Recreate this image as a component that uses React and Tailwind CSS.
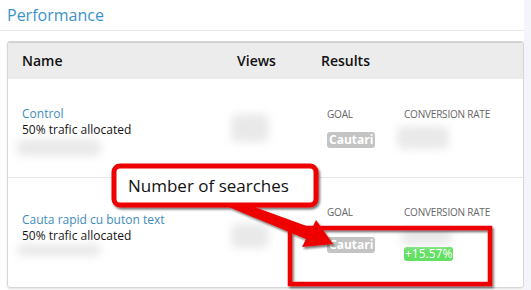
import React from "react";

const Blur = ({ className }) => (
  <div className={`rounded-md bg-[#e9e9e9] blur-[4px] ${className}`} />
);

const Label = ({ children }) => (
  <span className="text-[10px] leading-[12px] text-[#666] tracking-[-0.2px] whitespace-nowrap">
    {children}
  </span>
);

const Row = ({ name, last, children }) => (
  <div
    className={`grid grid-cols-[215px_84px_1fr] pl-[14px] items-center ${
      last ? "h-[109px] pt-[2px]" : "h-[100px] border-b border-[#e6e6e6]"
    }`}
  >
    <div className={`flex flex-col ${last ? "" : "mt-[6px]"}`}>
      <span className="text-[12px] leading-[16px] text-[#3d8dbd]">{name}</span>
      <span className="text-[12px] leading-[16px] text-[#111]">50% trafic allocated</span>
      <Blur className={`ml-[-5px] w-[84px] ${last ? "mt-[0px] h-[12px]" : "mt-[1px] h-[17px]"}`} />
    </div>
    <div>
      <Blur className={`ml-[-6px] w-[38px] ${last ? "h-[24px] mt-[4px]" : "h-[28px]"}`} />
    </div>
    <div className="flex pl-[6px]">{children}</div>
  </div>
);

const Goal = ({ mt }) => (
  <div className="flex flex-col w-[77px]">
    <Label>GOAL</Label>
    <span
      className={`${mt} self-start rounded-[3px] bg-[#c4c4c4] px-[2px] text-[12px] leading-[16px] font-bold text-white`}
    >
      Cautari
    </span>
  </div>
);

const Arrow = () => (
  <svg
    className="absolute left-0 top-0 pointer-events-none"
    width="531"
    height="290"
    viewBox="0 0 531 290"
  >
    <defs>
      <filter id="sh" x="-20%" y="-20%" width="140%" height="140%">
        <feDropShadow dx="1.5" dy="2" stdDeviation="1.2" floodColor="#000" floodOpacity="0.55" />
      </filter>
    </defs>
    <g filter="url(#sh)">
      <rect x="290" y="228" width="200" height="56" fill="none" stroke="#ee0000" strokeWidth="4.5" />
      <polygon points="224,205 230,198 312,228 316,220 333,244 302,247 306,239" fill="#ee0000" />
      <rect x="114" y="166" width="202" height="39" rx="6" fill="#fff" stroke="#ee0000" strokeWidth="5" />
    </g>
  </svg>
);

export default function App() {
  return (
    <div
      className="relative w-[531px] h-[290px] overflow-hidden bg-white"
      style={{ fontFamily: '"Open Sans", "Liberation Sans", sans-serif' }}
    >
      <div className="flex h-full">
        <div className="w-[524px] flex flex-col">
          <div className="h-[31px] border-b border-[#e8e8e8] px-[7px] pt-[3px] text-[16px] leading-[24px] text-[#3b93c8]">
            Performance
          </div>
          <div className="mt-[10px] ml-[7px] flex flex-col rounded-[3px] border border-[#d6d6d6] shadow-[0_1px_2px_rgba(0,0,0,0.12)] h-[247px]">
            <div className="grid grid-cols-[215px_84px_1fr] pl-[14px] h-[37px] items-center bg-[#ececec] text-[14px] font-semibold text-[#111] border-t border-[#cfcfcf]">
              <span>Name</span>
              <span>Views</span>
              <span>Results</span>
            </div>
            <Row name="Control">
              <Goal mt="mt-[12px]" />
              <div className="flex flex-col">
                <Label>CONVERSION RATE</Label>
                <Blur className="mt-[6px] ml-[-7px] w-[52px] h-[23px]" />
              </div>
            </Row>
            <Row name="Cauta rapid cu buton text" last>
              <Goal mt="mt-[19px]" />
              <div className="flex flex-col">
                <Label>CONVERSION RATE</Label>
                <Blur className="mt-[11px] ml-[-3px] w-[51px] h-[16px]" />
                <span className="self-start mt-[2px] rounded-[3px] bg-[#62e062] px-[1px] text-[12px] leading-[14px] text-white">
                  +15.57%
                </span>
              </div>
            </Row>
          </div>
        </div>
        <div className="flex-1 bg-[#f3f5fa]" />
      </div>
      <Arrow />
      <div className="absolute left-[128px] top-[174px] text-[17px] leading-[24px] text-[#111]">
        Number of searches
      </div>
    </div>
  );
}
